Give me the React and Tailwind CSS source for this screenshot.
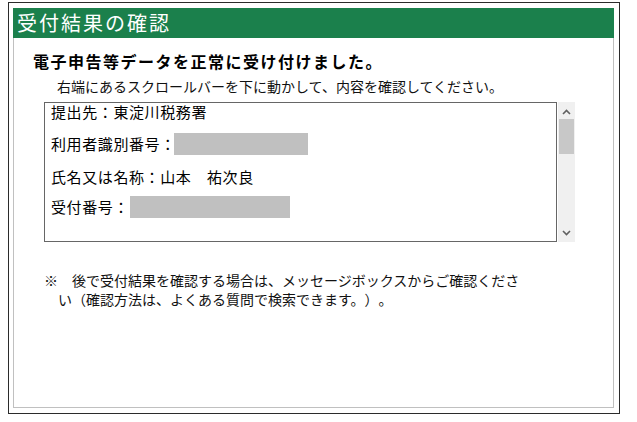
import React from "react";

const FONT = { fontFamily: '"Noto Sans CJK JP", "Noto Sans", sans-serif' };

function Chevron({ up }) {
  return (
    <svg width="9" height="6" viewBox="0 0 9 6" className="block">
      <path
        d={up ? "M1 5 L4.5 1.5 L8 5" : "M1 1 L4.5 4.5 L8 1"}
        fill="none"
        stroke="#606060"
        strokeWidth="1.6"
      />
    </svg>
  );
}

export default function App() {
  return (
    <div className="w-[637px] h-[422px] bg-white text-black overflow-hidden [text-spacing-trim:space-all]" style={FONT}>
      <div className="ml-[8px] mt-[2px] w-[612px] h-[412px] border border-[#2b2b2b] pl-[4px] pr-[5px] pt-[5px] pb-[5px] flex flex-col">
        <div className="flex flex-col flex-1">
          <div className="h-[30px] bg-[#1b804c] flex items-center pl-[4px]">
            <span className="text-white text-[20px] leading-[30px] tracking-[2px]">受付結果の確認</span>
          </div>
          <div className="flex-1 border-l border-r border-b border-[#c0c0c0] flex flex-col">
            <div className="ml-[19px] mt-[13px] text-[16px] leading-[20px] font-bold tracking-[1.5px] whitespace-nowrap">
              電子申告等データを正常に受け付けました。
            </div>
            <div className="ml-[43px] mt-[5px] text-[14px] leading-[20px] whitespace-nowrap text-[#111]">
              右端にあるスクロールバーを下に動かして、内容を確認してください。
            </div>
            <div className="ml-[30px] mt-[6px] flex">
              <div className="w-[513px] h-[140px] border border-[#666] pl-[6px] flex flex-col text-[15px] tracking-[0.6px] whitespace-nowrap">
                <div className="h-[18px] flex items-center">提出先：東淀川税務署</div>
                <div className="h-[22px] mt-[12px] flex items-center">
                  <span>利用者識別番号：</span>
                  <span className="-ml-[2px] w-[134px] h-[22px] bg-[#c0c0c0]" />
                </div>
                <div className="h-[22px] mt-[11px] flex items-center">氏名又は名称：山本　祐次良</div>
                <div className="h-[22px] mt-[8px] flex items-center">
                  <span>受付番号：</span>
                  <span className="ml-[1px] w-[160px] h-[22px] bg-[#c0c0c0]" />
                </div>
              </div>
              <div className="ml-[1px] w-[17px] h-[140px] bg-[#f0f0f0] flex flex-col items-center">
                <div className="h-[17px] flex items-center justify-center pt-[2px]">
                  <Chevron up />
                </div>
                <div className="w-[15px] h-[35px] bg-[#c8c8c8]" />
                <div className="flex-1" />
                <div className="h-[17px] flex items-center justify-center pb-[2px]">
                  <Chevron />
                </div>
              </div>
            </div>
            <div className="ml-[30px] mt-[29px] pl-[14px] -indent-[14px] text-[14px] leading-[19px] whitespace-nowrap text-[#111]">
              ※　後で受付結果を確認する場合は、メッセージボックスからご確認くださ
              <br />
              い（確認方法は、よくある質問で検索できます。）。
            </div>
          </div>
        </div>
      </div>
    </div>
  );
}
